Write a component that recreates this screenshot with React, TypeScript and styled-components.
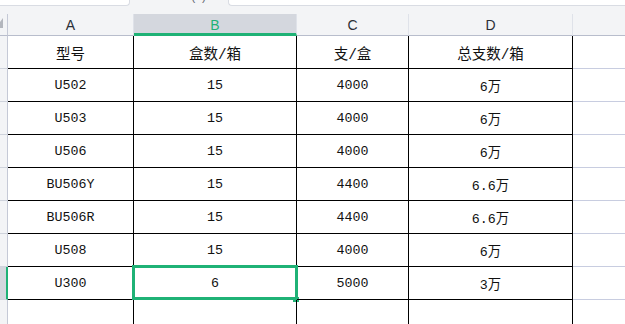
import React from "react";
import styled, { createGlobalStyle, css } from "styled-components";

const GREEN = "#1fb276";

const Global = createGlobalStyle`
  html, body { margin: 0; padding: 0; background: #ffffff; }
  body { width: 625px; height: 324px; overflow: hidden; }
`;

const Page = styled.div`
  width: 625px;
  height: 324px;
  overflow: hidden;
  background: #ffffff;
  display: flex;
  flex-direction: column;
`;

const TabBar = styled.div`
  height: 6px;
  display: flex;
  background: #f3f4f6;
  flex: none;
`;

const Tab = styled.div<{ $w?: number; $side: "left" | "right" }>`
  box-sizing: border-box;
  height: 6px;
  background: #ffffff;
  border-bottom: 1px solid #d9dce3;
  ${(p) => (p.$w ? `width: ${p.$w}px; flex: none;` : "flex: 1;")}
  ${(p) =>
    p.$side === "left"
      ? css`
          border-right: 1px solid #d9dce3;
          border-bottom-right-radius: 4px;
        `
      : css`
          border-left: 1px solid #d9dce3;
          border-bottom-left-radius: 4px;
        `}
`;

const ActiveTab = styled.div`
  width: 98px;
  flex: none;
  overflow: hidden;
  display: flex;
  justify-content: flex-end;
  padding-right: 22px;
  box-sizing: border-box;
`;

const TabLabel = styled.span`
  font-family: "Liberation Sans", Arial, sans-serif;
  font-size: 12px;
  line-height: 12px;
  color: #666a73;
  margin-top: -10px;
`;

const ToolGap = styled.div`
  height: 8px;
  background: #f3f4f6;
  flex: none;
`;

const Sheet = styled.div`
  display: grid;
  grid-template-columns: 8px 126px 163px 112px 164px 1fr;
  grid-template-rows: 22px repeat(9, 33px);
`;

const Corner = styled.div`
  box-sizing: border-box;
  background: #f3f4f6;
  border-right: 1px solid #c5c9d6;
  border-bottom: 1px solid #b8bdcc;
  display: flex;
  align-items: flex-start;
  padding-top: 4px;
`;

const CornerMark = styled.span`
  display: block;
  width: 3px;
  height: 10px;
  background: #b3b6bd;
  clip-path: polygon(100% 0, 100% 100%, 0 100%, 0 40%);
`;

const ColHead = styled.div<{ $active?: boolean; $last?: boolean }>`
  box-sizing: border-box;
  display: flex;
  align-items: center;
  justify-content: center;
  font-family: "Liberation Sans", Arial, sans-serif;
  font-size: 14px;
  color: #2b2f36;
  background: #f3f4f6;
  border-right: ${(p) => (p.$last ? "none" : "1px solid #dfe2e9")};
  border-bottom: 1px solid #b8bdcc;
  padding-top: 1px;
  ${(p) =>
    p.$active &&
    css`
      background: #d4d7de;
      color: ${GREEN};
      border-bottom: 3px solid ${GREEN};
      padding-top: 3px;
    `}
`;

const RowHead = styled.div<{ $active?: boolean }>`
  box-sizing: border-box;
  background: ${(p) => (p.$active ? "#d4d7de" : "#f3f4f6")};
  border-right: ${(p) => (p.$active ? `2px solid ${GREEN}` : "1px solid #c5c9d6")};
  border-bottom: 1px solid #cfd3dc;
`;

const Cell = styled.div<{ $head?: boolean }>`
  position: relative;
  box-sizing: border-box;
  display: flex;
  align-items: center;
  justify-content: center;
  border-right: 1px solid #000000;
  border-bottom: 1px solid #000000;
  font-family: "Liberation Mono", "Noto Sans CJK SC", monospace;
  font-size: ${(p) => (p.$head ? "14.5px" : "13.33px")};
  color: #111111;
  padding-top: 1px;
`;

const Filler = styled.div`
  box-sizing: border-box;
  border-bottom: 1px solid #c8cde0;
`;

const Selection = styled.div`
  position: absolute;
  left: -2px;
  top: -2px;
  width: 166px;
  height: 35px;
  box-sizing: border-box;
  border: 3px solid ${GREEN};
  pointer-events: none;
`;

const FillHandle = styled.div`
  position: absolute;
  left: 159px;
  top: 30px;
  width: 6px;
  height: 5px;
  background: ${GREEN};
`;

const columns = ["A", "B", "C", "D"];

const rows: string[][] = [
  ["型号", "盒数/箱", "支/盒", "总支数/箱"],
  ["U502", "15", "4000", "6万"],
  ["U503", "15", "4000", "6万"],
  ["U506", "15", "4000", "6万"],
  ["BU506Y", "15", "4400", "6.6万"],
  ["BU506R", "15", "4400", "6.6万"],
  ["U508", "15", "4000", "6万"],
  ["U300", "6", "5000", "3万"],
  ["", "", "", ""],
];

const SELECTED_ROW = 7;
const SELECTED_COL = 1;

export default function App() {
  return (
    <Page>
      <Global />
      <TabBar>
        <Tab $w={130} $side="left" />
        <ActiveTab>
          <TabLabel>(1)</TabLabel>
        </ActiveTab>
        <Tab $side="right" />
      </TabBar>
      <ToolGap />
      <Sheet>
        <Corner>
          <CornerMark />
        </Corner>
        {columns.map((c, i) => (
          <ColHead key={c} $active={i === SELECTED_COL}>
            {c}
          </ColHead>
        ))}
        <ColHead $last />
        {rows.map((r, ri) => (
          <React.Fragment key={ri}>
            <RowHead $active={ri === SELECTED_ROW} />
            {r.map((v, ci) => (
              <Cell key={ci} $head={ri === 0}>
                {v}
                {ri === SELECTED_ROW && ci === SELECTED_COL && (
                  <Selection />
                )}
                {ri === SELECTED_ROW && ci === SELECTED_COL && (
                  <FillHandle />
                )}
              </Cell>
            ))}
            <Filler />
          </React.Fragment>
        ))}
      </Sheet>
    </Page>
  );
}
